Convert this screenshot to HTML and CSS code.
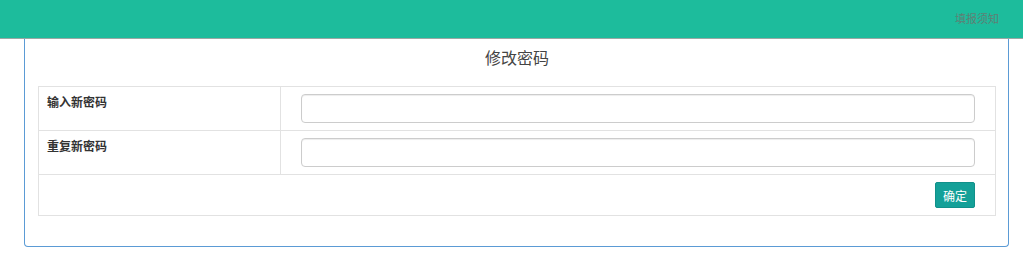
FILE: index.html
```html
<!DOCTYPE html>
<html>
<head>
  <meta charset="UTF-8">
  <title>修改密码</title>
  <link rel="stylesheet" href="styles.css">
</head>
<body>
  <div class="topbar">
    <a class="notice-link" href="#">填报须知</a>
  </div>

  <div class="panel">
    <h3 class="panel-title">修改密码</h3>
    <table class="pwd-table">
      <tr>
        <td class="label-cell">输入新密码</td>
        <td class="input-cell"><input type="password" id="newPwd"></td>
      </tr>
      <tr>
        <td class="label-cell">重复新密码</td>
        <td class="input-cell"><input type="password" id="repeatPwd"></td>
      </tr>
      <tr>
        <td class="btn-cell" colspan="2"><button class="ok-btn">确定</button></td>
      </tr>
    </table>
  </div>
</body>
</html>
```

FILE: styles.css
```css
/* 页面基础 */
body {
  margin: 0;
  font-family: "Noto Sans CJK SC", "Liberation Sans", sans-serif;
  font-size: 12px;
  color: #333;
  background-color: #fff;
}

/* 顶部栏 */
.topbar {
  height: 38px;
  background-color: #1dbc9c;
  border-bottom: 1px solid #9aa8a4;
  display: flex;
  justify-content: flex-end;
  align-items: center;
  padding-right: 24px;
}

.notice-link {
  color: #5f7f74;
  font-size: 11px;
  text-decoration: none;
  margin-top: -2px;
}

/* 内容面板 */
.panel {
  margin: 0 14px 0 24px;
  padding: 0 12px 30px 13px;
  border: 1px solid #5b9bd5;
  border-top: none;
  border-radius: 0 0 4px 4px;
}

.panel-title {
  margin: 0;
  padding: 7px 0 18px;
  line-height: 22px;
  font-size: 16px;
  font-weight: normal;
  text-align: center;
  color: #444;
}

/* 表格 */
.pwd-table {
  width: 100%;
  border-collapse: collapse;
}

.pwd-table td {
  border: 1px solid #e2e2e2;
  vertical-align: top;
}

.label-cell {
  width: 225px;
  padding: 7px 8px;
  font-weight: bold;
  line-height: 16px;
  height: 29px;
  box-sizing: content-box;
}

.input-cell {
  padding: 7px 20px;
}

.input-cell input {
  display: block;
  width: 100%;
  height: 29px;
  box-sizing: border-box;
  border: 1px solid #ccc;
  border-radius: 4px;
  box-shadow: inset 0 1px 1px rgba(0, 0, 0, 0.075);
  outline: none;
}

.btn-cell {
  padding: 7px 20px;
  text-align: right;
}

.ok-btn {
  width: 40px;
  height: 26px;
  padding: 0;
  border: 1px solid #11908a;
  border-radius: 2px;
  background-color: #14a098;
  color: #fff;
  font-family: inherit;
  font-size: 12px;
  cursor: pointer;
}
```
